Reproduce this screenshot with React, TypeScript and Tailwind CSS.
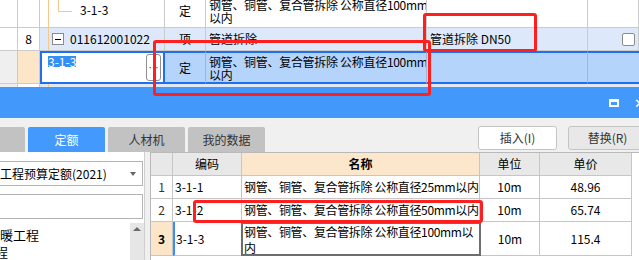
const topLine = "border-r border-b border-[#cbcbcb]";
const gridLine = "border-r border-b border-[#c6c6c6]";

const quotaRows = [
  { no: "1", code: "3-1-1", name: "钢管、铜管、复合管拆除 公称直径25mm以内", unit: "10m", price: "48.96" },
  { no: "2", code: "3-1-2", name: "钢管、铜管、复合管拆除 公称直径50mm以内", unit: "10m", price: "65.74" },
];

function TopGrid() {
  return (
    <div className="h-[87px] overflow-hidden bg-white text-[12px] text-black">
      {/* sub item row */}
      <div className="flex h-[28px]">
        <div className={`w-[18px] ${topLine}`} />
        <div className={`w-[22px] ${topLine}`} />
        <div className={`relative w-[125px] pl-[40px] pt-[2px] leading-[16px] ${topLine}`}>
          <span className="absolute left-[8px] top-0 bottom-0 w-px bg-[#f5c98c]" />
          <span className="absolute left-[18px] top-0 h-[11px] w-px bg-[#f5c98c]" />
          <span className="absolute left-[18px] top-[11px] h-px w-[14px] bg-[#f5c98c]" />
          3-1-3
        </div>
        <div className={`w-[41px] pt-[3px] text-center leading-[16px] ${topLine}`}>定</div>
        <div className={`w-[221px] overflow-hidden whitespace-nowrap pl-[3px] leading-[13px] tracking-[-0.3px] ${topLine}`}>
          <div className="-mt-[2px]">钢管、铜管、复合管拆除 公称直径100mm</div>
          <div>以内</div>
        </div>
        <div className={`w-[161px] ${topLine}`} />
        <div className={`w-[51px] ${topLine}`} />
      </div>

      {/* item row */}
      <div className="flex h-[23px] items-stretch">
        <div className={`w-[18px] ${topLine}`} />
        <div className={`flex w-[22px] items-center justify-center ${topLine}`}>8</div>
        <div className={`relative flex w-[125px] items-center bg-[#dde9fb] pl-[12px] ${topLine}`}>
          <span className="absolute left-[8px] top-0 bottom-0 w-px bg-[#f5c98c]" />
          <span className="flex h-[12px] w-[12px] items-center justify-center border border-[#8a8a8a] bg-white">
            <span className="h-px w-[6px] bg-black" />
          </span>
          <span className="ml-[6px]">011612001022</span>
        </div>
        <div className={`flex w-[41px] items-center justify-center bg-[#dde9fb] ${topLine}`}>项</div>
        <div className={`flex w-[221px] items-center bg-[#dde9fb] pl-[3px] ${topLine}`}>管道拆除</div>
        <div className={`flex w-[161px] items-center bg-[#dde9fb] pl-[3px] ${topLine}`}>管道拆除 DN50</div>
        <div className={`flex w-[51px] items-center bg-[#dde9fb] pl-[34px] ${topLine}`}>
          <span className="h-[13px] w-[13px] rounded-[2px] border border-[#8c8c8c] bg-white" />
        </div>
      </div>

      {/* editing row */}
      <div className="flex h-[33px]">
        <div className="w-[18px] border-r border-b border-[#cbcbcb] bg-[#efefef]" />
        <div className="w-[22px] border-r border-b border-[#cbcbcb] bg-[#fde6c8]" />
        <div className="flex w-[125px] justify-between border-2 border-[#1f6ff0] bg-white pl-[6px] pr-[2px]">
          <span className="mt-[3px] h-[11px] bg-[#3390f5] text-[12px] leading-[11px] text-white">3-1-3</span>
          <span className="my-[1px] flex w-[15px] items-center justify-center rounded-[3px] border border-[#8f8f8f] bg-white text-[10px] leading-none text-[#444]">
            …
          </span>
        </div>
        <div className="flex w-[41px] items-center justify-center border-y-2 border-r border-[#1f6ff0] border-r-[#9fb7d6] bg-[#b5d4fb]">定</div>
        <div className="flex w-[221px] flex-col justify-center overflow-hidden whitespace-nowrap border-y-2 border-r border-[#1f6ff0] border-r-[#9fb7d6] bg-[#b5d4fb] pl-[3px] leading-[13px] tracking-[-0.3px]">
          <div>钢管、铜管、复合管拆除 公称直径100mm</div>
          <div>以内</div>
        </div>
        <div className="w-[161px] border-y-2 border-r border-[#1f6ff0] border-r-[#9fb7d6] bg-[#b5d4fb]" />
        <div className="w-[51px] border-y-2 border-[#1f6ff0] bg-[#b5d4fb]" />
      </div>

      {/* next row, cut off */}
      <div className="flex h-[4px]">
        <div className="w-[18px] border-r border-[#cbcbcb] bg-[#efefef]" />
        <div className="w-[22px] border-r border-[#cbcbcb] bg-white" />
        <div className="relative flex-1 bg-[#dfe8f4]">
          <span className="absolute left-[8px] top-0 bottom-0 w-px bg-[#f5c98c]" />
        </div>
      </div>
    </div>
  );
}

function TitleBar() {
  return (
    <div className="flex h-[31px] items-center justify-end bg-[#4398fc]">
      <span className="mr-[15px] h-[8px] w-[10px] border-2 border-t-[3px] border-white" />
      <span className="-mr-[6px] text-[13px] leading-none text-white">✕</span>
    </div>
  );
}

function Toolbar() {
  return (
    <div className="flex h-[37px] text-[12px]">
      <div className="flex gap-[3px] self-end">
        <div className="-ml-[52px] h-[25px] w-[77px] rounded-t-[2px] bg-[#c2c2c2]" />
        <div className="flex h-[25px] w-[77px] items-center justify-center rounded-t-[2px] bg-[#4499ff] text-white">定额</div>
        <div className="flex h-[25px] w-[77px] items-center justify-center rounded-t-[2px] bg-[#c2c2c2] text-[#333]">人材机</div>
        <div className="flex h-[25px] w-[77px] items-center justify-center rounded-t-[2px] bg-[#c2c2c2] text-[#333]">我的数据</div>
      </div>
      <div className="flex-1" />
      <div className="flex shrink-0 gap-[11px] pt-[8px]">
        <button className="h-[24px] w-[79px] rounded-[3px] border border-[#c4c4c4] bg-white text-[#333]">插入(I)</button>
        <button className="-mr-[8px] h-[24px] w-[79px] rounded-[3px] border border-[#c4c4c4] bg-[#e8e8e8] text-[#333]">替换(R)</button>
      </div>
    </div>
  );
}

function LeftPanel() {
  return (
    <div className="flex w-[145px] shrink-0 flex-col overflow-hidden border-r border-[#cfcfcf] bg-white text-[12px] text-black">
      <div className="-ml-[6px] mt-[9px] flex h-[25px] w-[149px] items-center justify-between border border-[#b4b4b4] bg-white pl-[5px] pr-[6px]">
        <span>工程预算定额(2021)</span>
        <span className="h-0 w-0 border-x-[3px] border-t-[4px] border-x-transparent border-t-[#666]" />
      </div>
      <div className="-ml-[6px] mt-[8px] h-[25px] w-[149px] border border-[#b4b4b4] bg-white" />
      <div className="mt-[4px] flex flex-1">
        <div className="flex-1 pt-[3px] leading-[17px]">
          <div className="text-[13px]">暖工程</div>
          <div className="-ml-[5px] text-[13px]">程</div>
        </div>
        <div className="flex w-[14px] justify-center bg-[#e6e6e6] pt-[4px]">
          <span className="h-0 w-0 border-x-[4px] border-b-[4px] border-x-transparent border-b-[#6a6a6a]" />
        </div>
      </div>
    </div>
  );
}

function QuotaGrid() {
  return (
    <div className="ml-[5px] flex-1 border-t border-l border-[#b9b9b9] bg-white text-[12px] text-black">
      <div className="flex h-[23px]">
        <div className={`w-[22px] bg-[#e8e8e8] ${gridLine}`} />
        <div className={`flex w-[69px] items-center justify-center bg-[#e8e8e8] ${gridLine}`}>编码</div>
        <div className={`flex w-[238px] items-center justify-center bg-[#fde7cc] font-bold ${gridLine}`}>名称</div>
        <div className={`flex w-[60px] items-center justify-center bg-[#e8e8e8] ${gridLine}`}>单位</div>
        <div className={`flex w-[92px] items-center justify-center bg-[#e8e8e8] ${gridLine}`}>单价</div>
      </div>
      {quotaRows.map((r) => (
        <div key={r.no} className="flex h-[23px]">
          <div className={`flex w-[22px] items-center justify-center text-[#333] ${gridLine}`}>{r.no}</div>
          <div className={`flex w-[69px] items-center pl-[2px] ${gridLine}`}>{r.code}</div>
          <div className={`flex w-[238px] items-center overflow-hidden whitespace-nowrap pl-[2px] tracking-[-0.35px] ${gridLine}`}>{r.name}</div>
          <div className={`flex w-[60px] items-center justify-center ${gridLine}`}>{r.unit}</div>
          <div className={`flex w-[92px] items-center justify-center ${gridLine}`}>{r.price}</div>
        </div>
      ))}
      <div className="flex h-[34px]">
        <div className={`flex w-[22px] items-center justify-center bg-[#fde6c8] font-bold ${gridLine}`}>3</div>
        <div className={`flex w-[69px] items-center border-l-2 border-l-[#3a8cff] pl-[1px] ${gridLine}`}>3-1-3</div>
        <div className="-ml-px w-[240px] overflow-hidden whitespace-nowrap border-2 border-[#6e6e6e] pl-[1px] leading-[16px] tracking-[-0.35px]">
          <div>钢管、铜管、复合管拆除 公称直径100mm以</div>
          <div>内</div>
        </div>
        <div className={`flex w-[59px] items-center justify-center ${gridLine}`}>10m</div>
        <div className={`flex w-[92px] items-center justify-center ${gridLine}`}>115.4</div>
      </div>
    </div>
  );
}

export default function App() {
  return (
    <div className="relative h-[260px] w-[639px] overflow-hidden bg-white font-['Noto_Sans_CJK_SC',sans-serif]">
      <TopGrid />
      <TitleBar />
      <div className="flex h-[142px] flex-col bg-[#f0f0f0]">
        <Toolbar />
        <div className="flex flex-1">
          <LeftPanel />
          <QuotaGrid />
        </div>
      </div>

      {/* red annotation boxes */}
      <div className="absolute left-[153px] top-[40px] h-[56px] w-[278px] rounded-[3px] border-[3px] border-[#ff1f1f]" />
      <div className="absolute left-[423px] top-[13px] h-[39px] w-[114px] rounded-[3px] border-[3px] border-[#ff1f1f]" />
      <div className="absolute left-[193px] top-[200px] h-[23px] w-[290px] rounded-[3px] border-[3px] border-[#ff1f1f]" />
    </div>
  );
}
